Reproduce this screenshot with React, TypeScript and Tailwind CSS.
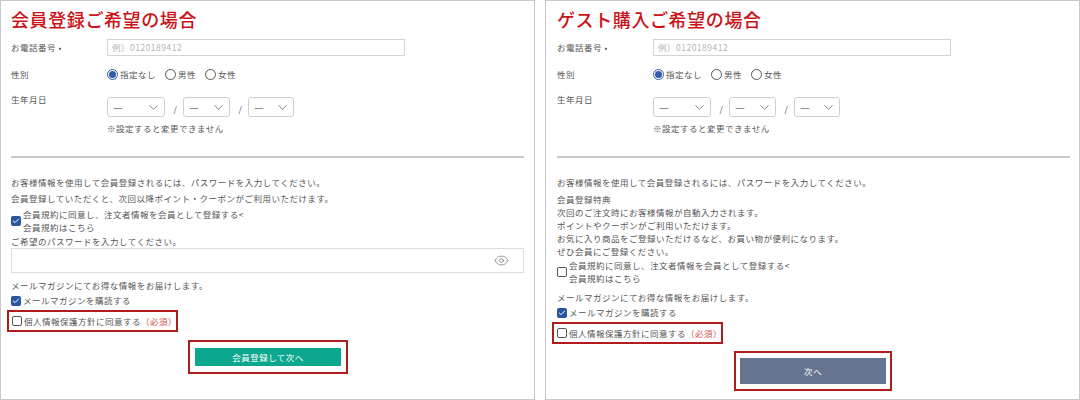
import { Check, ChevronDown, Eye } from 'lucide-react';
import type { ReactNode } from 'react';

function Line({ children, className = '' }: { children: ReactNode; className?: string }) {
  return <p className={`h-[13px] leading-[13px] ${className}`}>{children}</p>;
}

function Radio({ label, on = false }: { label: string; on?: boolean }) {
  return (
    <div className="flex items-center gap-[2px]">
      <span
        className={`flex h-[11px] w-[11px] items-center justify-center rounded-full border ${
          on ? 'border-[#2f5da8]' : 'border-[#555555]'
        }`}
      >
        {on && <span className="h-[7px] w-[7px] rounded-full bg-[#2f5da8]" />}
      </span>
      <span>{label}</span>
    </div>
  );
}

function DateSelect({ width }: { width: string }) {
  return (
    <div className={`flex h-[20px] items-center justify-between rounded-[3px] border border-[#cfcfcf] pl-[5px] pr-[3px] ${width}`}>
      <span className="text-[11px] text-[#777777]">—</span>
      <ChevronDown size={15} strokeWidth={1.3} className="text-[#666666]" />
    </div>
  );
}

function Box({ checked = false }: { checked?: boolean }) {
  if (checked) {
    return (
      <span className="flex h-[10px] w-[10px] shrink-0 items-center justify-center rounded-[2px] bg-[#2a569f]">
        <Check size={8} strokeWidth={3} className="text-white" />
      </span>
    );
  }
  return <span className="h-[10px] w-[10px] shrink-0 rounded-[2px] border border-[#555555] bg-white" />;
}

function AgreeRow({ checked = false }: { checked?: boolean }) {
  return (
    <div className="flex items-center gap-[2px]">
      <Box checked={checked} />
      <div>
        <Line>会員規約に同意し、注文者情報を会員として登録する&lt;</Line>
        <Line>会員規約はこちら</Line>
      </div>
    </div>
  );
}

function MailBlock({ boxClass }: { boxClass: string }) {
  return (
    <>
      <Line>メールマガジンにてお得な情報をお届けします。</Line>
      <div className="mt-[2px] flex h-[13px] items-center gap-[2px]">
        <Box checked />
        <span>メールマガジンを購読する</span>
      </div>
      {/* 赤枠の注釈 */}
      <div className={`mt-[3px] flex h-[22px] w-[171px] items-center gap-[2px] whitespace-nowrap border-2 border-[#b01c1c] pl-[3px] ${boxClass}`}>
        <Box />
        <span>個人情報保護方針に同意する</span>
        <span className="ml-[-2px] text-[#d9534f]">（必須）</span>
      </div>
    </>
  );
}

function FormTop({ title }: { title: string }) {
  return (
    <>
      <h2 className="flex h-[38px] items-center pb-[2px] text-[18px] font-medium tracking-[0.6px] text-[#cb1218]">{title}</h2>

      <div className="flex h-[17px] items-center">
        <span className="w-[96px] shrink-0">お電話番号 •</span>
        <div className="flex h-[17px] w-[298px] items-center border border-[#d4d4d4] pl-[4px] text-[#b5b5b5]">例）0120189412</div>
      </div>

      <div className="mt-[10px] flex h-[16px] items-center">
        <span className="w-[96px] shrink-0">性別</span>
        <div className="flex gap-[9px]">
          <Radio label="指定なし" on />
          <Radio label="男性" />
          <Radio label="女性" />
        </div>
      </div>

      <div className="mt-[15px] flex">
        <span className="mt-[-4px] w-[96px] shrink-0">生年月日</span>
        <div>
          <div className="flex items-center">
            <DateSelect width="w-[58px]" />
            <span className="w-[18px] pl-[3px] pt-[4px] text-center">/</span>
            <DateSelect width="w-[47px]" />
            <span className="w-[18px] pl-[3px] pt-[4px] text-center">/</span>
            <DateSelect width="w-[46px]" />
          </div>
          <Line className="mt-[5px]">※設定すると変更できません</Line>
        </div>
      </div>

      <hr className="mt-[21px] w-[513px] border-t-2 border-[#c9c9c9]" />
    </>
  );
}

function Panel({ children, className }: { children: ReactNode; className: string }) {
  return <section className={`h-[400px] w-[535px] border border-[#c8c8c8] bg-white ${className}`}>{children}</section>;
}

function SubmitBox({ label, color, className }: { label: string; color: string; className: string }) {
  return (
    <div className={`flex items-center justify-center border-2 border-[#b01c1c] ${className}`}>
      <div className={`flex h-full w-[146px] items-center justify-center text-white ${color}`}>{label}</div>
    </div>
  );
}

export default function App() {
  return (
    <div
      className="flex h-[400px] w-[1080px] gap-[10px] overflow-hidden bg-white text-[8.5px] tracking-[0.5px] text-[#555555]"
      style={{ fontFamily: '"Noto Sans CJK JP", "Noto Sans", sans-serif' }}
    >
      <Panel className="pl-[10px]">
        <FormTop title="会員登録ご希望の場合" />
        <Line className="mt-[18px]">お客様情報を使用して会員登録されるには、パスワードを入力してください。</Line>
        <Line className="mt-[3px]">会員登録していただくと、次回以降ポイント・クーポンがご利用いただけます。</Line>
        <div className="mt-[3px]">
          <AgreeRow checked />
        </div>
        <Line className="mt-[1px]">ご希望のパスワードを入力してください。</Line>
        <div className="flex h-[25px] w-[513px] items-center justify-end border border-[#dddddd] pr-[14px]">
          <Eye size={15} strokeWidth={1.2} className="text-[#777777]" />
        </div>
        <div className="mt-[6px]">
          <MailBlock boxClass="ml-[-4px]" />
        </div>
        <SubmitBox label="会員登録して次へ" color="bg-[#0ca78f]" className="ml-[177px] mt-[8px] h-[34px] w-[160px] py-[6px]" />
      </Panel>

      <Panel className="pl-[11px]">
        <FormTop title="ゲスト購入ご希望の場合" />
        <Line className="mt-[18px]">お客様情報を使用して会員登録されるには、パスワードを入力してください。</Line>
        <div className="mt-[4px]">
          <Line>会員登録特典</Line>
          <Line>次回のご注文時にお客様情報が自動入力されます。</Line>
          <Line>ポイントやクーポンがご利用いただけます。</Line>
          <Line>お気に入り商品をご登録いただけるなど、お買い物が便利になります。</Line>
          <Line>ぜひ会員にご登録ください。</Line>
        </div>
        <div className="mt-[1px]">
          <AgreeRow />
        </div>
        <div className="mt-[6px]">
          <MailBlock boxClass="ml-[-5px]" />
        </div>
        <SubmitBox label="次へ" color="bg-[#66758f]" className="ml-[177px] mt-[7px] h-[40px] w-[158px] py-[5px]" />
      </Panel>
    </div>
  );
}
